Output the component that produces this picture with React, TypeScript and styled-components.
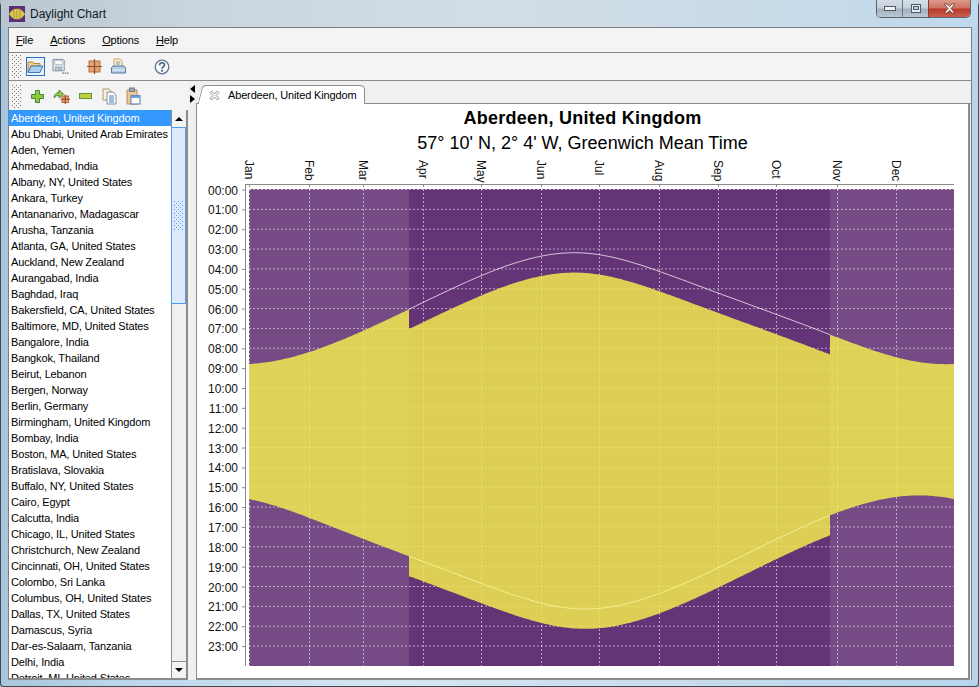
import { useMemo } from "react";
import styled, { createGlobalStyle } from "styled-components";

const GlobalStyle = createGlobalStyle`
  html, body {
    margin: 0;
    padding: 0;
    background: #9fb7c9;
    overflow: hidden;
  }
`;

const Window = styled.div`
  width: 979px;
  height: 687px;
  box-sizing: border-box;
  display: flex;
  flex-direction: column;
  padding: 0 6px 6px 7px;
  border-radius: 6px 6px 4px 4px;
  border: 1px solid #3d4a55;
  border-width: 0 1px 1px 1px;
  background: linear-gradient(90deg, #a9c6dc 0%, #bcd6ea 12%, #d6e6f2 40%, #c8dceb 70%, #b7d5ec 100%);
  font-family: "Liberation Sans", Arial, sans-serif;
  font-size: 11px;
  letter-spacing: -0.15px;
  color: #000;
`;

const TitleBar = styled.div`
  height: 27px;
  flex: none;
  display: flex;
  align-items: flex-start;
  background: linear-gradient(90deg, #b9c6cf 0%, #c9d6df 20%, #d3dde5 50%, #c8dbe9 80%, #bfd9ee 100%);
  margin: 0 -6px 0 -7px;
  padding-left: 8px;
  padding-right: 7px;
`;

const AppIcon = styled.svg`
  width: 16px;
  height: 16px;
  margin-top: 6px;
  flex: none;
`;

const TitleText = styled.div`
  margin-left: 5px;
  margin-top: 6px;
  font-size: 12px;
  letter-spacing: 0;
  line-height: 16px;
  color: #10181f;
`;

const CaptionButtons = styled.div`
  margin-left: auto;
  display: flex;
  height: 18px;
  border: 1px solid #59646e;
  border-top: none;
  border-radius: 0 0 5px 5px;
  overflow: hidden;
  box-sizing: border-box;
`;

const CaptionButton = styled.div<{ $w: number; $close?: boolean }>`
  width: ${({ $w }) => $w}px;
  display: flex;
  align-items: center;
  justify-content: center;
  border-left: ${({ $close }) => ($close ? "1px solid #8a3a30" : "1px solid #6d7884")};
  background: ${({ $close }) =>
    $close
      ? "linear-gradient(180deg, #dd9a8c 0%, #cf7262 45%, #bb3a2a 55%, #c9604e 100%)"
      : "linear-gradient(180deg, #d5dee7 0%, #c6d1dc 45%, #a3b0bf 55%, #bcc8d4 100%)"};
  &:first-child {
    border-left: none;
  }
`;

const Body = styled.div`
  flex: 1;
  min-height: 0;
  display: flex;
  flex-direction: column;
  background: #f0f0f0;
  border: 1px solid #7c7f82;
  border-bottom: none;
`;

const MenuBar = styled.div`
  height: 24px;
  flex: none;
  display: flex;
  align-items: center;
  padding-left: 7px;
  gap: 17px;
  background: #f4f4f4;
  border-bottom: 1px solid #8a8a8a;
`;

const MenuItem = styled.span`
  line-height: 16px;
  u {
    text-decoration: underline;
  }
`;

const Toolbar = styled.div<{ $small?: boolean }>`
  height: ${({ $small }) => ($small ? 28 : 27)}px;
  padding-top: ${({ $small }) => ($small ? 1 : 0)}px;
  flex: none;
  display: flex;
  align-items: center;
  padding-left: 3px;
  background: #f4f4f4;
  border-bottom: ${({ $small }) => ($small ? "none" : "1px solid #8a8a8a")};
`;

const Grip = styled.div<{ $gap?: number }>`
  width: 9px;
  height: 23px;
  flex: none;
  margin-right: ${({ $gap }) => $gap ?? 5}px;
  background-image: radial-gradient(circle at 0.5px 0.5px, #777 0.6px, transparent 0.7px),
    radial-gradient(circle at 0.5px 0.5px, #777 0.6px, transparent 0.7px);
  background-size: 4px 4px;
  background-position: 0 0, 2px 2px;
`;

const ToolButton = styled.div<{ $active?: boolean; $gap?: number }>`
  width: 19px;
  height: 19px;
  flex: none;
  margin-right: ${({ $gap }) => $gap ?? 5}px;
  display: flex;
  align-items: center;
  justify-content: center;
  box-sizing: border-box;
  border: ${({ $active }) => ($active ? "1px solid #2a6fc4" : "1px solid transparent")};
  background: ${({ $active }) => ($active ? "#eaf3fc" : "transparent")};
`;

const Split = styled.div`
  flex: 1;
  min-height: 0;
  display: flex;
`;

const LeftPanel = styled.div`
  width: 179px;
  flex: none;
  display: flex;
  flex-direction: column;
  min-height: 0;
`;

const ListBox = styled.div`
  flex: 1;
  min-height: 0;
  display: flex;
  background: #fff;
  border-right: 2px solid #8c8c8c;
  border-bottom: 2px solid #8c8c8c;
`;

const CityList = styled.div`
  flex: 1;
  min-width: 0;
  overflow: hidden;
`;

const CityRow = styled.div<{ $selected?: boolean }>`
  height: 16px;
  line-height: 16px;
  padding-left: 2px;
  white-space: nowrap;
  background: ${({ $selected }) => ($selected ? "#3399ff" : "transparent")};
  color: ${({ $selected }) => ($selected ? "#fff" : "#000")};
`;

const ScrollBar = styled.div`
  width: 14px;
  flex: none;
  display: flex;
  flex-direction: column;
  background: #f0f0f0;
  border-left: 1px solid #8c8c8c;
`;

const ScrollButton = styled.div<{ $down?: boolean }>`
  height: ${({ $down }) => ($down ? 16 : 17)}px;
  flex: none;
  display: flex;
  align-items: center;
  justify-content: center;
  background: #f4f4f4;
  border-top: ${({ $down }) => ($down ? "1px solid #8c8c8c" : "none")};
  &::before {
    content: "";
    border-left: 4px solid transparent;
    border-right: 4px solid transparent;
    border-bottom: ${({ $down }) => ($down ? "none" : "4px solid #000")};
    border-top: ${({ $down }) => ($down ? "4px solid #000" : "none")};
  }
`;

const ScrollThumb = styled.div`
  height: 177px;
  flex: none;
  box-sizing: border-box;
  display: flex;
  align-items: center;
  justify-content: center;
  background: #dceafb;
  border: 1px solid #4d9cee;
  margin-left: -1px;
`;

const ThumbGrip = styled.div`
  width: 10px;
  height: 30px;
  background-image: radial-gradient(circle at 0.5px 0.5px, #4d9cee 0.6px, transparent 0.7px),
    radial-gradient(circle at 0.5px 0.5px, #4d9cee 0.6px, transparent 0.7px);
  background-size: 4px 4px;
  background-position: 0 0, 2px 2px;
`;

const ScrollTrack = styled.div`
  flex: 1;
`;

const Splitter = styled.div`
  width: 8px;
  flex: none;
  display: flex;
  flex-direction: column;
  padding-top: 4px;
  gap: 2px;
  align-items: center;
`;

const Arrow = styled.div<{ $right?: boolean }>`
  width: 0;
  height: 0;
  border-top: 4px solid transparent;
  border-bottom: 4px solid transparent;
  border-right: ${({ $right }) => ($right ? "none" : "5px solid #000")};
  border-left: ${({ $right }) => ($right ? "5px solid #000" : "none")};
`;

const RightPanel = styled.div`
  flex: 1;
  min-width: 0;
  display: flex;
  flex-direction: column;
`;

const TabStrip = styled.div`
  height: 21px;
  flex: none;
  padding-left: 9px;
  margin-top: 1px;
  display: flex;
  align-items: flex-end;
  border-bottom: 1px solid #8c8c8c;
`;

const Tab = styled.div`
  position: relative;
  height: 19px;
  width: 160px;
  box-sizing: border-box;
  margin-bottom: -1px;
  display: flex;
  align-items: center;
  gap: 8px;
  padding-left: 4px;
  background: #fff;
  border: 1px solid #8c8c8c;
  border-left: none;
  border-bottom: none;
  border-radius: 0 5px 0 0;
  &::before {
    content: "";
    position: absolute;
    left: -5px;
    top: -1px;
    bottom: 0;
    width: 9px;
    background: #fff;
    border-left: 1px solid #8c8c8c;
    border-top: 1px solid #8c8c8c;
    border-radius: 4px 0 0 0;
    transform: skewX(-14deg);
  }
  & > * {
    position: relative;
  }
`;

const TabContent = styled.div`
  flex: 1;
  min-height: 0;
  display: flex;
  flex-direction: column;
  align-items: center;
  background: #fff;
  border: 1px solid #8c8c8c;
  border-top: none;
  border-bottom: 2px solid #8c8c8c;
  border-right: 2px solid #8c8c8c;
  margin-right: 1px;
`;

const ChartTitle = styled.div`
  margin-top: 2px;
  font-size: 18px;
  letter-spacing: 0.25px;
  line-height: 25px;
  font-weight: bold;
`;

const ChartSubtitle = styled.div`
  font-size: 18px;
  letter-spacing: 0;
  line-height: 25px;
`;

const ChartSvg = styled.svg`
  display: block;
  width: 774px;
  height: 522px;
  flex: none;
  margin-top: -1px;
`;

const AxisLabel = styled.text`
  font-family: "Liberation Sans", Arial, sans-serif;
  font-size: 12px;
  letter-spacing: 0;
  fill: #111;
`;

const cities = [
  "Aberdeen, United Kingdom",
  "Abu Dhabi, United Arab Emirates",
  "Aden, Yemen",
  "Ahmedabad, India",
  "Albany, NY, United States",
  "Ankara, Turkey",
  "Antananarivo, Madagascar",
  "Arusha, Tanzania",
  "Atlanta, GA, United States",
  "Auckland, New Zealand",
  "Aurangabad, India",
  "Baghdad, Iraq",
  "Bakersfield, CA, United States",
  "Baltimore, MD, United States",
  "Bangalore, India",
  "Bangkok, Thailand",
  "Beirut, Lebanon",
  "Bergen, Norway",
  "Berlin, Germany",
  "Birmingham, United Kingdom",
  "Bombay, India",
  "Boston, MA, United States",
  "Bratislava, Slovakia",
  "Buffalo, NY, United States",
  "Cairo, Egypt",
  "Calcutta, India",
  "Chicago, IL, United States",
  "Christchurch, New Zealand",
  "Cincinnati, OH, United States",
  "Colombo, Sri Lanka",
  "Columbus, OH, United States",
  "Dallas, TX, United States",
  "Damascus, Syria",
  "Dar-es-Salaam, Tanzania",
  "Delhi, India",
  "Detroit, MI, United States",
];

const months = [
  ["Jan", 249],
  ["Feb", 309],
  ["Mar", 363],
  ["Apr", 423],
  ["May", 481],
  ["Jun", 541],
  ["Jul", 599],
  ["Aug", 659],
  ["Sep", 718],
  ["Oct", 776],
  ["Nov", 837],
  ["Dec", 896],
] as const;

const PLOT = { left: 249, right: 954, top: 189.5, bottom: 666, hour: 19.85 };
const DST_START = 83;
const DST_END = 301;
const dstLeft = 409;
const dstRight = 830;

const rad = Math.PI / 180;

// sunrise and sunset in GMT hours for Aberdeen
function sunTimes(day: number) {
  const lat = 57.17 * rad;
  const decl = 23.44 * rad * Math.sin((2 * Math.PI * (day - 80)) / 365);
  const b = (2 * Math.PI * (day - 81)) / 365;
  const eot = 9.87 * Math.sin(2 * b) - 7.53 * Math.cos(b) - 1.5 * Math.sin(b);
  const cosH =
    (Math.sin(-0.833 * rad) - Math.sin(lat) * Math.sin(decl)) /
    (Math.cos(lat) * Math.cos(decl));
  const h = Math.acos(cosH) / rad / 15;
  const noon = 12 + 8.27 / 60 - eot / 60;
  return { rise: noon - h, set: noon + h };
}

const xOfDay = (d: number) => {
  if (d === DST_START) return dstLeft;
  if (d === DST_END) return dstRight;
  return PLOT.left + ((PLOT.right - PLOT.left) * d) / 365;
};
const yOfHour = (h: number) => PLOT.top + h * PLOT.hour;

function pts(list: number[][]) {
  return list.map(([x, y]) => `${x.toFixed(1)},${y.toFixed(1)}`).join(" ");
}

function DaylightChart() {
  const { daylight, riseLine, setLine } = useMemo(() => {
    const band = (from: number, to: number, shift: number) => {
      const top: number[][] = [];
      const bottom: number[][] = [];
      for (let d = from; d <= to; d += 1) {
        const s = sunTimes(d);
        top.push([xOfDay(d), yOfHour(s.rise + shift)]);
        bottom.unshift([xOfDay(d), yOfHour(s.set + shift)]);
      }
      return { top, bottom };
    };
    const a = band(0, DST_START, 0);
    const b = band(DST_START, DST_END, 1);
    const c = band(DST_END, 365, 0);
    const g = band(DST_START, DST_END, 0);
    return {
      daylight: pts([...a.top, ...b.top, ...c.top, ...c.bottom, ...b.bottom, ...a.bottom]),
      riseLine: pts(g.top),
      setLine: pts(g.bottom),
    };
  }, []);

  const hours = Array.from({ length: 24 }, (_, i) => i);

  return (
    <ChartSvg viewBox="196 155 774 522">
      <rect x={PLOT.left} y={189} width={PLOT.right - PLOT.left} height={477} fill="#764a85" />
      <rect x={dstLeft} y={189} width={dstRight - dstLeft} height={477} fill="#643476" />

      {hours.map((h) => (
        <line
          key={h}
          x1={PLOT.left}
          x2={PLOT.right}
          y1={yOfHour(h)}
          y2={yOfHour(h)}
          stroke="#ffffff"
          strokeOpacity="0.55"
          strokeDasharray="2 2"
        />
      ))}
      {months.map(([name, x]) => (
        <line key={name} x1={x + 0.5} x2={x + 0.5} y1={189} y2={666} stroke="#ffffff" strokeOpacity="0.55" strokeDasharray="2 2" />
      ))}

      <polygon points={daylight} fill="#f2ea51" fillOpacity="0.85" />
      <polyline points={riseLine} fill="none" stroke="#ffffff" strokeOpacity="0.75" strokeWidth="1" />
      <polyline points={setLine} fill="none" stroke="#fff6a0" strokeOpacity="0.8" strokeWidth="1" />

      <line x1={245} x2={954} y1={184.5} y2={184.5} stroke="#8a8a8a" />
      <line x1={245.5} x2={245.5} y1={184} y2={666} stroke="#8a8a8a" />
      {months.map(([name, x]) => (
        <line key={name} x1={x + 0.5} x2={x + 0.5} y1={184} y2={187} stroke="#8a8a8a" />
      ))}
      {hours.map((h) => (
        <g key={h}>
          <line x1={242} x2={246} y1={yOfHour(h) + 0.5} y2={yOfHour(h) + 0.5} stroke="#8a8a8a" />
          <AxisLabel x={238} y={yOfHour(h) + 5} textAnchor="end">
            {String(h).padStart(2, "0") + ":00"}
          </AxisLabel>
        </g>
      ))}
      {months.map(([name, x]) => (
        <AxisLabel key={name} transform={`translate(${x - 4} 182) rotate(90)`} textAnchor="start" x={-22} y={0}>
          {name}
        </AxisLabel>
      ))}
    </ChartSvg>
  );
}

const OpenIcon = () => (
  <svg width="17" height="15" viewBox="0 0 17 15">
    <path d="M1 3h5l1 1.5h6V7H4L1 13z" fill="#f3d28c" stroke="#b08a3a" />
    <path d="M1 13.5 4 7h12l-3 6.5z" fill="#a9cdf0" stroke="#3d79b5" />
  </svg>
);

const SaveIcon = () => (
  <svg width="18" height="18" viewBox="0 0 18 18">
    <path d="M1 1h11l1 1v11H1z" fill="#dbe4ee" stroke="#7f93a8" />
    <rect x="3" y="2" width="8" height="4.5" fill="#f7f9fb" stroke="#a4b3c2" strokeWidth="0.7" />
    <rect x="4" y="9" width="6" height="4" fill="#bfc9d4" stroke="#7f93a8" strokeWidth="0.7" />
    <rect x="7" y="10" width="1.5" height="2" fill="#d9a34e" />
    <path d="M11 15.5h1.5M13.5 15.5H15M16 15.5h1.5" stroke="#42698f" strokeWidth="1.4" />
  </svg>
);

const GridIcon = ({ size = 15 }: { size?: number }) => (
  <svg width={size} height={size} viewBox="0 0 15 15">
    <rect x="2" y="2" width="11" height="11" fill="#e0a476" stroke="#b87038" />
    <path d="M7.5 0v15M0 7.5h15" stroke="#9a4a20" strokeWidth="1.2" />
  </svg>
);

const PrintIcon = () => (
  <svg width="17" height="17" viewBox="0 0 17 17">
    <path d="M4 1h6l2 2v6H4z" fill="#fbf0d2" stroke="#c9a762" />
    <path d="M6 4h4M6 6h4" stroke="#7d98b5" />
    <path d="M1.5 9.5 3 8h11l1.5 1.5V15h-14z" fill="#b4cce4" stroke="#54789c" />
    <path d="M2 12h13" stroke="#e6eff7" />
  </svg>
);

const HelpIcon = () => (
  <svg width="16" height="16" viewBox="0 0 16 16">
    <circle cx="8" cy="8" r="6.8" fill="#f7f9fb" stroke="#5f7691" strokeWidth="1.3" />
    <path d="M5.6 6.2c0-3.2 4.9-3.2 4.9-.2 0 2-2.5 1.8-2.5 3.8" fill="none" stroke="#4a6076" strokeWidth="1.6" />
    <rect x="7.1" y="10.8" width="1.8" height="1.8" fill="#4a6076" />
  </svg>
);

const PlusIcon = () => (
  <svg width="13" height="13" viewBox="0 0 13 13">
    <path d="M4.5.5h4v4h4v4h-4v4h-4v-4h-4v-4h4z" fill="#8dc63f" stroke="#3d8a3a" />
  </svg>
);

const AddGridIcon = () => (
  <svg width="17" height="15" viewBox="0 0 17 15">
    <path d="M1 9C1 5 4 3.5 6 3.5V1l4.5 4L6 9V6.5C4 6.5 2.5 7 1 9z" fill="#8dc63f" stroke="#3d7a34" strokeWidth="0.8" />
    <rect x="9" y="7" width="6.5" height="6.5" fill="#e0a476" stroke="#b87038" />
    <path d="M12.2 5.5v9.5M7.5 10.2H17" stroke="#8a4520" />
  </svg>
);

const MinusIcon = () => (
  <svg width="13" height="7" viewBox="0 0 13 7">
    <rect x="0.5" y="0.5" width="12" height="5" fill="#c3cf3a" stroke="#5c9438" />
  </svg>
);

const CopyIcon = () => (
  <svg width="16" height="17" viewBox="0 0 16 17">
    <path d="M1 1h6l2 2v9H1z" fill="#fbf2da" stroke="#a69a80" />
    <path d="M5 4h6l3 3v9H5z" fill="#fff" stroke="#7f8ea0" />
    <path d="M7 8h5M7 10h5M7 12h5M7 14h5" stroke="#4c7bb0" />
  </svg>
);

const PasteIcon = () => (
  <svg width="15" height="18" viewBox="0 0 15 18">
    <path d="M1 3h10v14H1z" fill="#f0c79a" stroke="#b98a5a" />
    <rect x="3.5" y="1" width="5" height="3.5" fill="#9aa7b5" stroke="#6f7d8c" />
    <rect x="5" y="8.5" width="9" height="8.5" fill="#fff" stroke="#4c7bb0" />
    <rect x="5" y="8.5" width="9" height="2.5" fill="#6ea2d6" />
  </svg>
);

const CloseTabIcon = () => (
  <svg width="11" height="11" viewBox="0 0 11 11">
    <path
      d="M1 2.5 2.5 1 5.5 4 8.5 1 10 2.5 7 5.5 10 8.5 8.5 10 5.5 7 2.5 10 1 8.5 4 5.5z"
      fill="#fff"
      stroke="#8d8d8d"
    />
  </svg>
);

export default function App() {
  return (
    <>
      <GlobalStyle />
      <Window>
        <TitleBar>
          <AppIcon viewBox="0 0 16 16">
            <rect width="16" height="16" fill="#5b2f78" />
            <path d="M0 8C4 1 12 1 16 8 12 15 4 15 0 8z" fill="#d9c84a" />
            <path d="M5 2v12M8 2v12M11 2v12" stroke="#8f7f3a" strokeWidth="0.6" />
          </AppIcon>
          <TitleText>Daylight Chart</TitleText>
          <CaptionButtons>
            <CaptionButton $w={25}>
              <svg width="12" height="6" viewBox="0 0 12 6">
                <rect x="0.5" y="0.5" width="11" height="4" fill="#f2f4f6" stroke="#4e5a66" />
              </svg>
            </CaptionButton>
            <CaptionButton $w={25}>
              <svg width="10" height="9" viewBox="0 0 10 9">
                <rect x="0.5" y="0.5" width="9" height="8" fill="#e8edf2" stroke="#4e5a66" />
                <rect x="2.5" y="2.5" width="5" height="3" fill="#c3ced9" stroke="#4e5a66" />
              </svg>
            </CaptionButton>
            <CaptionButton $w={41} $close>
              <svg width="13" height="11" viewBox="0 0 13 11">
                <path
                  d="M1 1h3l2.5 2.5L9 1h3L8 5.5l4 4.5H9L6.5 7.5 4 10H1l4-4.5z"
                  fill="#f4efec"
                  stroke="#6e3a34"
                  strokeWidth="0.8"
                />
              </svg>
            </CaptionButton>
          </CaptionButtons>
        </TitleBar>
        <Body>
          <MenuBar>
            <MenuItem><u>F</u>ile</MenuItem>
            <MenuItem><u>A</u>ctions</MenuItem>
            <MenuItem><u>O</u>ptions</MenuItem>
            <MenuItem><u>H</u>elp</MenuItem>
          </MenuBar>
          <Toolbar>
            <Grip />
            <ToolButton $active $gap={6}><OpenIcon /></ToolButton>
            <ToolButton $gap={15}><SaveIcon /></ToolButton>
            <ToolButton $gap={5}><GridIcon /></ToolButton>
            <ToolButton $gap={24}><PrintIcon /></ToolButton>
            <ToolButton><HelpIcon /></ToolButton>
          </Toolbar>
          <Split>
            <LeftPanel>
              <Toolbar $small>
                <Grip $gap={7} />
                <ToolButton><PlusIcon /></ToolButton>
                <ToolButton><AddGridIcon /></ToolButton>
                <ToolButton><MinusIcon /></ToolButton>
                <ToolButton><CopyIcon /></ToolButton>
                <ToolButton><PasteIcon /></ToolButton>
              </Toolbar>
              <ListBox>
                <CityList>
                  {cities.map((c, i) => (
                    <CityRow key={c} $selected={i === 0}>{c}</CityRow>
                  ))}
                </CityList>
                <ScrollBar>
                  <ScrollButton />
                  <ScrollThumb><ThumbGrip /></ScrollThumb>
                  <ScrollTrack />
                  <ScrollButton $down />
                </ScrollBar>
              </ListBox>
            </LeftPanel>
            <Splitter>
              <Arrow />
              <Arrow $right />
            </Splitter>
            <RightPanel>
              <TabStrip>
                <Tab>
                  <CloseTabIcon />
                  <span>Aberdeen, United Kingdom</span>
                </Tab>
              </TabStrip>
              <TabContent>
                <ChartTitle>Aberdeen, United Kingdom</ChartTitle>
                <ChartSubtitle>57° 10' N, 2° 4' W, Greenwich Mean Time</ChartSubtitle>
                <DaylightChart />
              </TabContent>
            </RightPanel>
          </Split>
        </Body>
      </Window>
    </>
  );
}
